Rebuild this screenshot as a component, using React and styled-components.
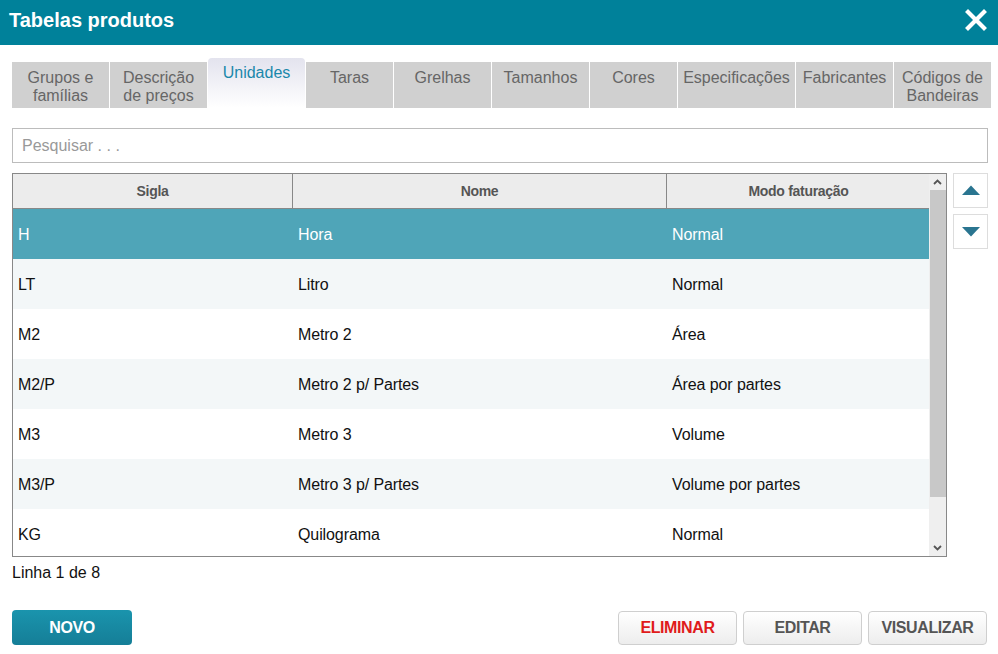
import React from 'react';
import styled, { createGlobalStyle } from 'styled-components';

const GlobalStyle = createGlobalStyle`
  html, body {
    margin: 0;
    padding: 0;
    background: #fff;
  }
  body {
    font-family: 'Liberation Sans', Arial, sans-serif;
  }
`

const Window = styled.div`
  width: 998px;
  height: 654px;
  background: #fff;
  overflow: hidden;
`

const TitleBar = styled.div`
  height: 45px;
  background: #00819a;
  display: flex;
  align-items: center;
  justify-content: space-between;
  padding: 0 11px 0 9px;
  box-sizing: border-box;
`

const Title = styled.h1`
  margin: 0;
  margin-top: -4px;
  color: #fff;
  font-size: 20px;
  font-weight: bold;
`

const CloseButton = styled.button`
  border: none;
  background: none;
  padding: 0;
  width: 22px;
  height: 22px;
  margin-top: -5px;
  cursor: pointer;
  display: flex;
`

const Content = styled.div`
  padding: 13px 10px 0 12px;
`

const TabRow = styled.div`
  display: flex;
  align-items: flex-end;
  gap: 1px;
  height: 50px;
`

const Tab = styled.div`
  width: ${p => p.$w}px;
  flex-shrink: 0;
  box-sizing: border-box;
  height: ${p => (p.$active ? 50 : 46)}px;
  padding: ${p => (p.$active ? 6 : 7)}px 3px 0;
  text-align: center;
  font-size: 16px;
  line-height: 18px;
  color: ${p => (p.$active ? '#1b88ab' : '#666')};
  background: ${p => (p.$active ? 'linear-gradient(#e3e3ee, #fff)' : '#d0d0d0')};
  border-radius: ${p => (p.$active ? '4px 4px 0 0' : '0')};
  cursor: pointer;
`

const Search = styled.input`
  display: block;
  width: 100%;
  box-sizing: border-box;
  margin-top: 20px;
  height: 35px;
  border: 1px solid #bcbcbc;
  padding: 0 9px;
  font-family: 'Liberation Sans', Arial, sans-serif;
  font-size: 16px;
  color: #333;
  outline: none;

  &::placeholder {
    color: #999;
  }
`

const GridArea = styled.div`
  display: flex;
  gap: 6px;
  margin-top: 10px;
`

const Table = styled.div`
  width: 935px;
  height: 384px;
  box-sizing: border-box;
  border: 1px solid #888;
  display: flex;
  overflow: hidden;
`

const TableMain = styled.div`
  width: 917px;
  display: flex;
  flex-direction: column;
  overflow: hidden;
`

const HeadRow = styled.div`
  display: grid;
  grid-template-columns: 280px 374px 263px;
  height: 35px;
  box-sizing: border-box;
  background: #ececec;
  border-bottom: 1px solid #888;
  flex-shrink: 0;
`

const HeadCell = styled.div`
  display: flex;
  align-items: center;
  justify-content: center;
  font-size: 14px;
  font-weight: bold;
  letter-spacing: -0.3px;
  color: #555;
  border-right: ${p => (p.$last ? 'none' : '1px solid #888')};
  padding-bottom: 1px;
`

const Row = styled.div`
  display: grid;
  grid-template-columns: 280px 374px 263px;
  height: 50px;
  flex-shrink: 0;
  background: ${p => (p.$selected ? '#4fa5b8' : p.$alt ? '#f3f7f8' : '#fff')};
  color: ${p => (p.$selected ? '#fff' : '#111')};
`

const Cell = styled.div`
  display: flex;
  align-items: center;
  padding: 2px 0 0 5px;
  font-size: 16px;
  letter-spacing: -0.1px;
`

const ScrollBar = styled.div`
  width: 17px;
  background: #efefef;
  display: flex;
  flex-direction: column;
`

const ScrollArrow = styled.div`
  height: 16px;
  display: flex;
  align-items: center;
  justify-content: center;
  flex-shrink: 0;
`

const Thumb = styled.div`
  height: 307px;
  margin-left: 1px;
  background: #c8c8c8;
  flex-shrink: 0;
`

const ScrollSpace = styled.div`
  flex: 1;
`

const SideButtons = styled.div`
  display: flex;
  flex-direction: column;
  gap: 6px;
`

const MoveButton = styled.button`
  width: 35px;
  height: 35px;
  box-sizing: border-box;
  border: 1px solid #ddd;
  background: #fff;
  display: flex;
  align-items: center;
  justify-content: center;
  padding: 0;
  cursor: pointer;
`

const Status = styled.div`
  margin-top: 7px;
  font-size: 16px;
  color: #111;
`

const Footer = styled.div`
  display: flex;
  justify-content: space-between;
  align-items: flex-start;
  margin-top: 28px;
  padding-right: 1px;
`

const FooterRight = styled.div`
  display: flex;
  gap: 6px;
  padding-top: 1px;
`

const PrimaryButton = styled.button`
  width: 120px;
  height: 35px;
  border: none;
  border-radius: 4px;
  background: linear-gradient(#1a94ad, #157e97);
  color: #fff;
  font-family: 'Liberation Sans', Arial, sans-serif;
  font-size: 16px;
  font-weight: bold;
  letter-spacing: -0.4px;
  cursor: pointer;
`

const GhostButton = styled.button`
  width: 119px;
  height: 34px;
  border: 1px solid #cfcfcf;
  border-radius: 4px;
  background: linear-gradient(#fff, #ededed);
  color: ${p => (p.$danger ? '#e01b1b' : '#555')};
  font-family: 'Liberation Sans', Arial, sans-serif;
  font-size: 16px;
  font-weight: bold;
  letter-spacing: -0.4px;
  cursor: pointer;
`

const tabs = [
  { label: 'Grupos e famílias', w: 97 },
  { label: 'Descrição de preços', w: 97 },
  { label: 'Unidades', w: 97, active: true },
  { label: 'Taras', w: 87 },
  { label: 'Grelhas', w: 97 },
  { label: 'Tamanhos', w: 97 },
  { label: 'Cores', w: 87 },
  { label: 'Especificações', w: 117 },
  { label: 'Fabricantes', w: 97 },
  { label: 'Códigos de Bandeiras', w: 97 },
]

// only the rows that fit in the visible part of the grid
const rows = [
  ['H', 'Hora', 'Normal'],
  ['LT', 'Litro', 'Normal'],
  ['M2', 'Metro 2', 'Área'],
  ['M2/P', 'Metro 2 p/ Partes', 'Área por partes'],
  ['M3', 'Metro 3', 'Volume'],
  ['M3/P', 'Metro 3 p/ Partes', 'Volume por partes'],
  ['KG', 'Quilograma', 'Normal'],
]

const Chevron = ({ down }) => (
  <svg width="9" height="6" viewBox="0 0 9 6">
    <path
      d={down ? 'M1 1 L4.5 4.5 L8 1' : 'M1 5 L4.5 1.5 L8 5'}
      fill="none"
      stroke="#555"
      strokeWidth="1.8"
    />
  </svg>
)

const Triangle = ({ down }) => (
  <svg width="20" height="11" viewBox="0 0 20 11">
    <path d={down ? 'M1 1 H19 L10 10.5 Z' : 'M1 10 H19 L10 0.5 Z'} fill="#2a7590" />
  </svg>
)

const App = () => {
  return (
    <Window>
      <GlobalStyle />
      <TitleBar>
        <Title>Tabelas produtos</Title>
        <CloseButton aria-label="Fechar">
          <svg width="22" height="22" viewBox="0 0 22 22">
            <path d="M3 3 L19 19 M19 3 L3 19" stroke="#fff" strokeWidth="4.2" strokeLinecap="square" />
          </svg>
        </CloseButton>
      </TitleBar>
      <Content>
        <TabRow>
          {tabs.map(t => (
            <Tab key={t.label} $w={t.w} $active={t.active}>{t.label}</Tab>
          ))}
        </TabRow>
        <Search placeholder="Pesquisar . . ." />
        <GridArea>
          <Table>
            <TableMain>
              <HeadRow>
                <HeadCell>Sigla</HeadCell>
                <HeadCell>Nome</HeadCell>
                <HeadCell $last>Modo faturação</HeadCell>
              </HeadRow>
              {rows.map((r, i) => (
                <Row key={r[0]} $selected={i === 0} $alt={i % 2 === 1}>
                  <Cell>{r[0]}</Cell>
                  <Cell>{r[1]}</Cell>
                  <Cell>{r[2]}</Cell>
                </Row>
              ))}
            </TableMain>
            <ScrollBar>
              <ScrollArrow><Chevron /></ScrollArrow>
              <Thumb />
              <ScrollSpace />
              <ScrollArrow><Chevron down /></ScrollArrow>
            </ScrollBar>
          </Table>
          <SideButtons>
            <MoveButton aria-label="Subir"><Triangle /></MoveButton>
            <MoveButton aria-label="Descer"><Triangle down /></MoveButton>
          </SideButtons>
        </GridArea>
        <Status>Linha 1 de 8</Status>
        <Footer>
          <PrimaryButton>NOVO</PrimaryButton>
          <FooterRight>
            <GhostButton $danger>ELIMINAR</GhostButton>
            <GhostButton>EDITAR</GhostButton>
            <GhostButton>VISUALIZAR</GhostButton>
          </FooterRight>
        </Footer>
      </Content>
    </Window>
  );
}

export default App
